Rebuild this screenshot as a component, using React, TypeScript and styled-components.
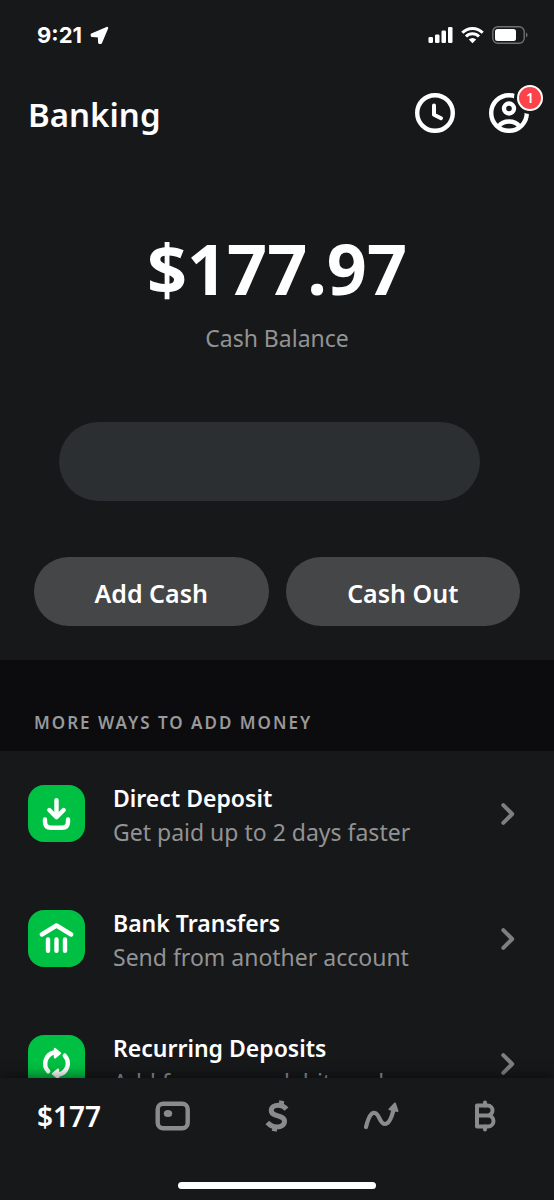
import React from "react";
import styled, { createGlobalStyle } from "styled-components";

const GlobalStyle = createGlobalStyle`
  * { box-sizing: border-box; }
  body {
    margin: 0;
    background: #17181a;
    color: #fff;
    font-family: "Noto Sans", sans-serif;
  }
  button { font: inherit; color: inherit; border: 0; cursor: pointer; }
`;

const Screen = styled.div`
  display: flex;
  flex-direction: column;
  height: 100vh;
`;

const StatusBar = styled.div`
  display: flex;
  align-items: center;
  justify-content: space-between;
  flex: none;
  height: 70px;
  padding: 0 26px 0 37px;
`;

const Clock = styled.div`
  display: flex;
  align-items: center;
  gap: 8px;
  font: 700 22px/28px Inter, sans-serif;
`;

const Indicators = styled.div`
  display: flex;
  align-items: center;
  gap: 8px;
`;

const Header = styled.header`
  display: flex;
  align-items: center;
  justify-content: space-between;
  flex: none;
  height: 86px;
  padding: 0 25px 0 28px;
`;

const Title = styled.h1`
  margin: 0;
  padding-top: 3px;
  font-size: 33px;
  line-height: 44px;
  font-weight: 600;
`;

const HeaderActions = styled.div`
  display: flex;
  gap: 34px;
`;

const IconButton = styled.button`
  position: relative;
  display: flex;
  padding: 0;
  background: none;
`;

const Badge = styled.span`
  position: absolute;
  top: -8px;
  right: -14px;
  display: flex;
  align-items: center;
  justify-content: center;
  width: 26px;
  height: 26px;
  border: 2px solid #fff;
  border-radius: 50%;
  background: #fc4349;
  font-size: 14px;
  line-height: 20px;
  font-weight: 600;
`;

const Content = styled.main`
  flex: 1;
  min-height: 0;
  overflow-y: auto;
  scrollbar-width: none;
`;

const Balance = styled.section`
  display: flex;
  flex-direction: column;
  align-items: center;
  padding: 64px 34px 34px;
`;

const Amount = styled.div`
  font-size: 70px;
  line-height: 96px;
  font-weight: 700;
`;

const AmountLabel = styled.div`
  margin-top: 6px;
  font-size: 23px;
  line-height: 32px;
  color: #929394;
`;

const AccountPill = styled.div`
  align-self: stretch;
  height: 79px;
  margin: 68px 40px 0 25px;
  border-radius: 40px;
  background: #2b2f32;
`;

const Actions = styled.div`
  display: flex;
  align-self: stretch;
  gap: 17px;
  margin-top: 56px;
`;

const ActionButton = styled.button`
  flex: 1;
  height: 69px;
  padding: 2px 0 0;
  border-radius: 35px;
  background: #454648;
  font-size: 25px;
  line-height: 32px;
  font-weight: 600;
`;

const SectionTitle = styled.h2`
  margin: 0;
  padding: 51px 34px 16px;
  background: #0c0c0e;
  color: #98999b;
  font-size: 17px;
  line-height: 24px;
  font-weight: 600;
  letter-spacing: 2px;
  text-transform: uppercase;
`;

const List = styled.ul`
  margin: 0;
  padding: 0;
  list-style: none;
`;

const Row = styled.button`
  display: flex;
  align-items: center;
  width: 100%;
  height: 125px;
  padding: 0 39px 0 28px;
  background: none;
  text-align: left;
`;

const Tile = styled.span`
  display: flex;
  flex: none;
  width: 57px;
  height: 57px;
  border-radius: 16px;
  background: #00c043;
`;

const RowText = styled.span`
  display: flex;
  flex: 1;
  flex-direction: column;
  margin-left: 28px;
  padding-top: 2px;
  font-size: 23px;
  line-height: 34px;
`;

const RowTitle = styled.span`
  font-weight: 600;
`;

const RowDetail = styled.span`
  color: #929394;
`;

const TabBar = styled.nav`
  position: relative;
  display: flex;
  flex: none;
  flex-direction: column;
  align-items: center;
  height: 122px;
  background: #17181a;
  box-shadow: 0 -2px 12px rgba(0, 0, 0, 0.5);
`;

const Tabs = styled.div`
  display: grid;
  grid-template-columns: repeat(5, 1fr);
  width: 100%;
  height: 75px;
  padding: 0 17px;
`;

const Tab = styled.button`
  display: flex;
  align-items: center;
  justify-content: center;
  padding: 0;
  background: none;
  color: #8a8b8d;
  font-size: 28px;
  line-height: 34px;
  font-weight: 600;

  &[aria-current="page"] { color: #fff; }
`;

const HomeIndicator = styled.div`
  width: 198px;
  height: 7px;
  margin-top: 29px;
  border-radius: 4px;
  background: #fff;
`;

const stroke = {
  fill: "none",
  stroke: "currentColor",
  strokeLinecap: "round",
  strokeLinejoin: "round",
} as const;

const LocationIcon = () => (
  <svg width="19" height="19" viewBox="0 0 19 19">
    <path d="M17 2 10.800 16.800 9.300 16.800 9 10.200 2 9.800 1.800 8.600Z" fill="#fff" stroke="#fff" strokeWidth="2.400" strokeLinejoin="round" />
  </svg>
);

const SignalIcon = () => (
  <svg width="25" height="18" viewBox="0 0 25 18" fill="#fff">
    <rect x="0.500" y="11" width="4.500" height="6" rx="1.300" />
    <rect x="7" y="8.500" width="4.500" height="8.500" rx="1.300" />
    <rect x="13.500" y="4.500" width="4.500" height="12.500" rx="1.300" />
    <rect x="20" y="1" width="4.500" height="16" rx="1.300" />
  </svg>
);

const WifiIcon = () => (
  <svg width="23" height="18" viewBox="0 0 23 18">
    <g fill="none" stroke="#fff" strokeWidth="3">
      <path d="M1.300 6.700a14.400 14.400 0 0 1 20.400 0" />
      <path d="M5 10.500a9.200 9.200 0 0 1 13 0" />
    </g>
    <path d="M11.500 17.300 7.800 13.600a5.300 5.300 0 0 1 7.400 0Z" fill="#fff" />
  </svg>
);

const BatteryIcon = () => (
  <svg width="36" height="18" viewBox="0 0 36 18">
    <rect x="0.800" y="0.800" width="31.400" height="16.400" rx="5" fill="none" stroke="#6f7072" strokeWidth="1.400" />
    <rect x="3" y="3" width="21" height="12" rx="2.500" fill="#fff" />
    <path d="M34 6.500c2 .8 2 4.200 0 5Z" fill="#6f7072" />
  </svg>
);

const HistoryIcon = () => (
  <svg width="40" height="40" viewBox="0 0 40 40" {...stroke}>
    <circle cx="20" cy="20" r="17.800" strokeWidth="4.400" />
    <path d="M19 12.500v9.200l7 3.500" strokeWidth="4" />
  </svg>
);

const ProfileIcon = () => (
  <svg width="40" height="40" viewBox="0 0 40 40" {...stroke}>
    <circle cx="20" cy="20" r="17.800" strokeWidth="4.400" />
    <circle cx="20" cy="15.500" r="5" strokeWidth="4.400" />
    <path d="M9.500 33.500C12 30 15.500 28.500 20 28.500s8 1.500 10.500 5" strokeWidth="4.400" />
    <circle cx="41" cy="5" r="16" fill="#17181a" stroke="none" />
  </svg>
);

const DepositIcon = () => (
  <svg width="57" height="57" viewBox="0 0 57 57" {...stroke} strokeWidth="4.400">
    <path d="M28.500 15.300v16.500M21.300 25l7.200 7.200 7.200-7.200" />
    <path d="M17 34.500v2.300q0 6 6 6h11q6 0 6-6V34.500" />
  </svg>
);

const BankIcon = () => (
  <svg width="57" height="57" viewBox="0 0 57 57" {...stroke} strokeWidth="4.400">
    <path d="M13.800 24.500 28.500 15.500l14.700 9" />
    <path d="M20 29.500v11.300M28.500 29.500v11.300M37 29.500v11.300" />
  </svg>
);

const RecurringArrow = () => (
  <>
    <path d="M20.200 36.300A11.400 11.400 0 0 1 26 17.500" />
    <path d="M26.800 13.800v8.800l5.400-4.400Z" fill="currentColor" strokeWidth="2" />
  </>
);

const RecurringIcon = () => (
  <svg width="57" height="57" viewBox="0 0 57 57" {...stroke} strokeWidth="4.400">
    <RecurringArrow />
    <g transform="rotate(180 28.500 28.500)">
      <RecurringArrow />
    </g>
  </svg>
);

const Chevron = () => (
  <svg width="14" height="24" viewBox="0 0 14 24" {...stroke} color="#7e7f81">
    <path d="M2.300 3.200 11.200 12l-8.900 8.800" strokeWidth="4" />
  </svg>
);

const CardIcon = () => (
  <svg width="36" height="30" viewBox="0 0 36 30" {...stroke}>
    <rect x="2.700" y="2.700" width="30" height="24.600" rx="5.500" strokeWidth="4.400" />
    <ellipse cx="13" cy="12.500" rx="4.200" ry="3.500" fill="currentColor" stroke="none" />
  </svg>
);

const DollarIcon = () => (
  <svg width="26" height="34" viewBox="0 0 26 34" {...stroke} strokeLinecap="butt" strokeWidth="5">
    <path d="M22.500 10.200C20.300 7.500 17.500 6.300 14.300 6.300c-3.900 0-7 1.900-7 5.200 0 7.200 13.200 3.600 13.200 10.800 0 3.700-3.200 5.600-7.500 5.600-3.800 0-7-1.500-9.700-4.400" />
    <path d="M17.800 1.800 16.800 7M10.200 32.300l1-5.300" />
  </svg>
);

const InvestIcon = () => (
  <svg width="36" height="30" viewBox="0 0 36 30" {...stroke}>
    <path d="M3 26C6 14 9 11 12 12c5 1.500 4.500 11 10 11 4 0 6.500-6 8.500-14" strokeWidth="4.200" />
    <path d="M32 2.500 26.500 8.300l8 1.700Z" fill="currentColor" strokeWidth="2" />
  </svg>
);

const BitcoinIcon = () => (
  <svg width="22" height="32" viewBox="0 0 22 32" {...stroke} strokeWidth="4">
    <path d="M3 5.500h10.500a5 5 0 0 1 0 10H3h11a5.500 5.500 0 0 1 0 11H3Z" />
    <path d="M11 2.500v3M11 26.500v3" />
  </svg>
);

const ways = [
  { title: "Direct Deposit", detail: "Get paid up to 2 days faster", Icon: DepositIcon },
  { title: "Bank Transfers", detail: "Send from another account", Icon: BankIcon },
  { title: "Recurring Deposits", detail: "Add from your debit card", Icon: RecurringIcon },
];

const tabs = [
  { name: "Card", Icon: CardIcon },
  { name: "Pay", Icon: DollarIcon },
  { name: "Investing", Icon: InvestIcon },
  { name: "Bitcoin", Icon: BitcoinIcon },
];

export default function App() {
  return (
    <Screen>
      <GlobalStyle />
      <StatusBar>
        <Clock>
          9:21
          <LocationIcon />
        </Clock>
        <Indicators>
          <SignalIcon />
          <WifiIcon />
          <BatteryIcon />
        </Indicators>
      </StatusBar>
      <Header>
        <Title>Banking</Title>
        <HeaderActions>
          <IconButton aria-label="Activity">
            <HistoryIcon />
          </IconButton>
          <IconButton aria-label="Profile, 1 notification">
            <ProfileIcon />
            <Badge>1</Badge>
          </IconButton>
        </HeaderActions>
      </Header>
      <Content>
        <Balance>
          <Amount>$177.97</Amount>
          <AmountLabel>Cash Balance</AmountLabel>
          <AccountPill />
          <Actions>
            <ActionButton>Add Cash</ActionButton>
            <ActionButton>Cash Out</ActionButton>
          </Actions>
        </Balance>
        <SectionTitle>More ways to add money</SectionTitle>
        <List>
          {ways.map(({ title, detail, Icon }) => (
            <li key={title}>
              <Row>
                <Tile>
                  <Icon />
                </Tile>
                <RowText>
                  <RowTitle>{title}</RowTitle>
                  <RowDetail>{detail}</RowDetail>
                </RowText>
                <Chevron />
              </Row>
            </li>
          ))}
        </List>
      </Content>
      <TabBar>
        <Tabs>
          <Tab aria-current="page">$177</Tab>
          {tabs.map(({ name, Icon }) => (
            <Tab key={name} aria-label={name}>
              <Icon />
            </Tab>
          ))}
        </Tabs>
        <HomeIndicator />
      </TabBar>
    </Screen>
  );
}
